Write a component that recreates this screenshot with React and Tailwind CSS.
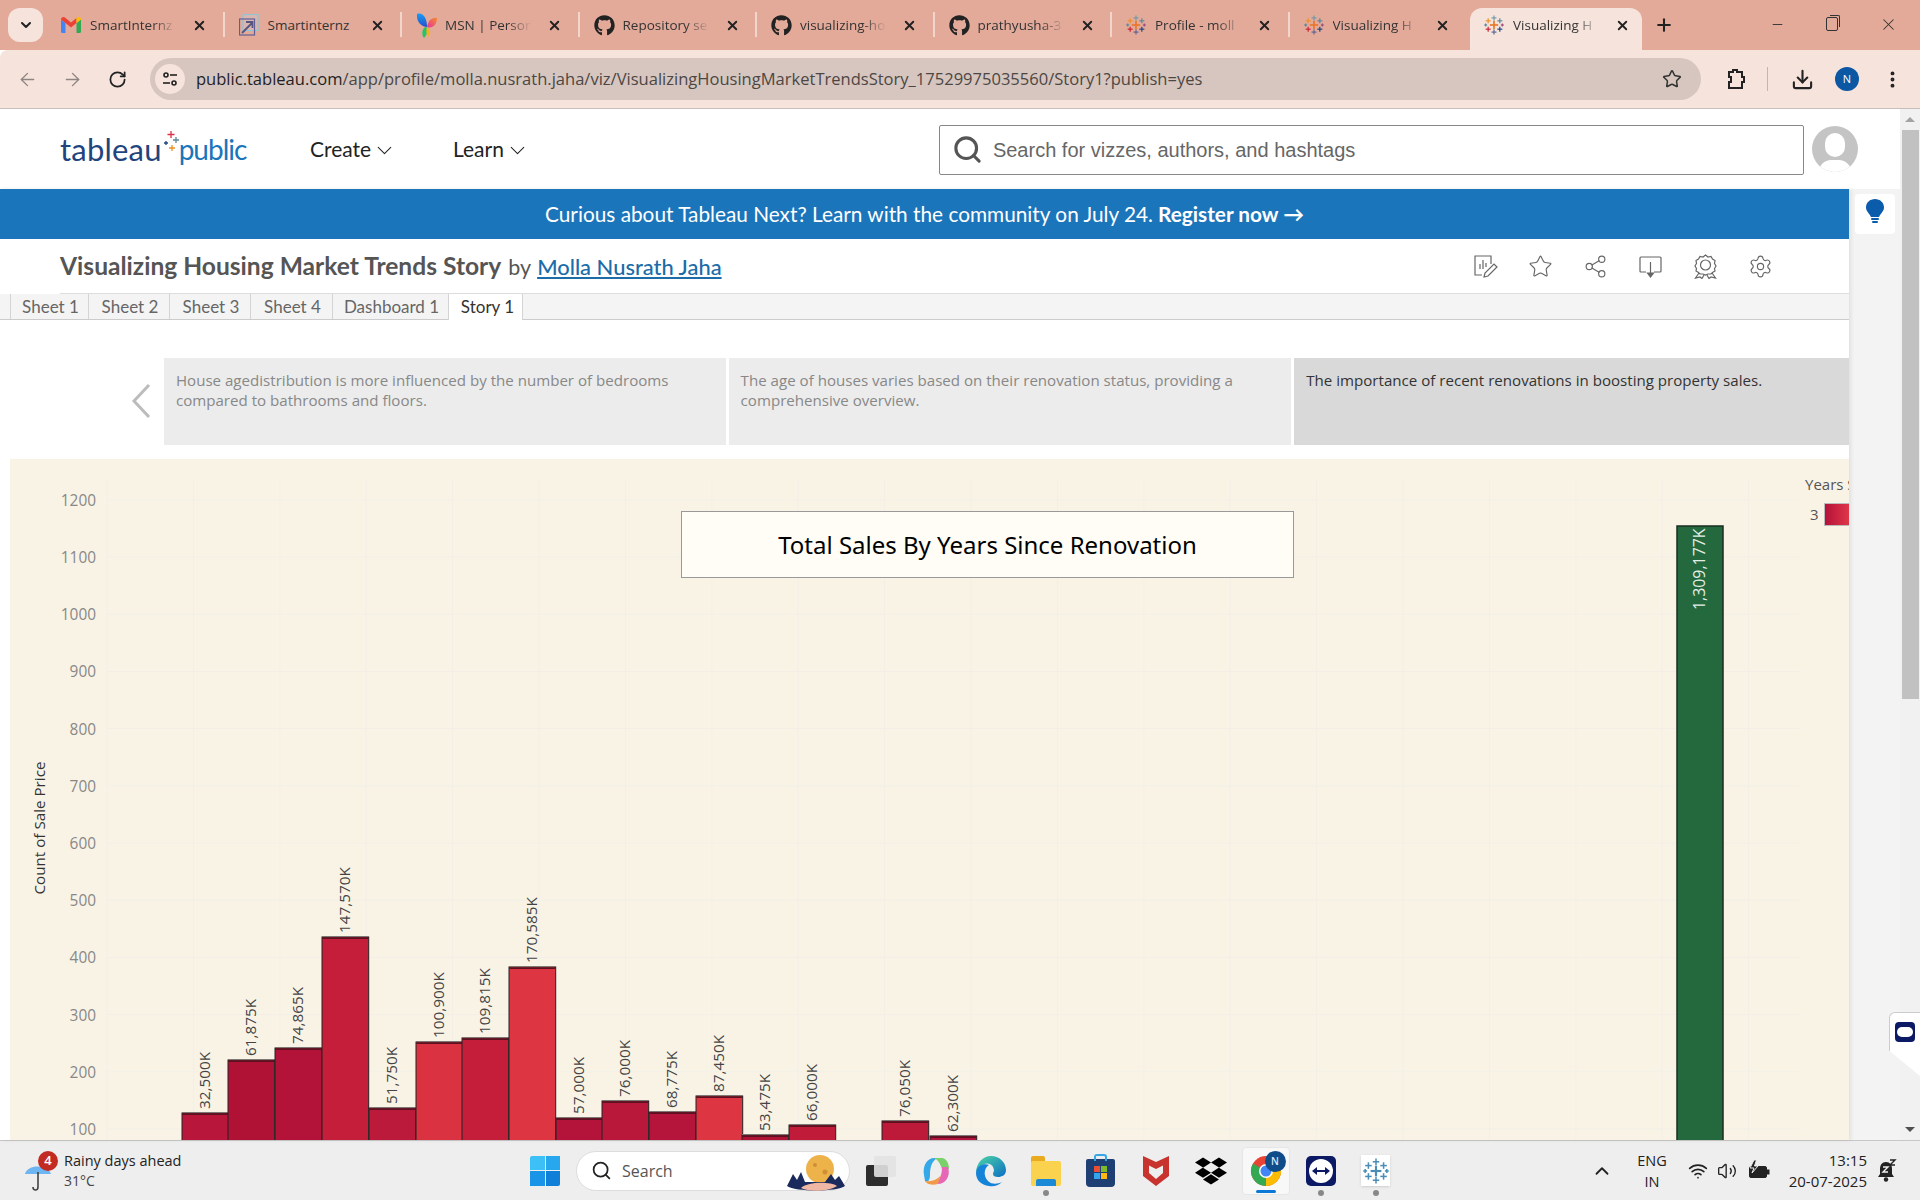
import React from "react";
import { FaGithub, FaDropbox } from "react-icons/fa";
import {
  ArrowLeft,
  ArrowRight,
  RotateCw,
  Star,
  Download,
  X,
  Plus,
  Minus,
  ChevronDown,
  ChevronUp,
  EllipsisVertical,
  Search,
  Share2,
  Settings,
  Wifi,
  Volume2,
} from "lucide-react";

const uiFont = "font-['Open_Sans','Noto_Sans',sans-serif]";
const tabFont = "font-['Lato','Noto_Sans',sans-serif]";

function TableauMark({ size = 20, mono }) {
  const cross = (x, y, r, c, w = 1.4) => (
    <g stroke={mono || c} strokeWidth={w}>
      <line x1={x - r} y1={y} x2={x + r} y2={y} />
      <line x1={x} y1={y - r} x2={x} y2={y + r} />
    </g>
  );
  return (
    <svg width={size} height={size} viewBox="0 0 24 24" className="shrink-0">
      {cross(12, 12, 5, "#e8762b", 2)}
      {cross(12, 3.5, 3, "#7099a6")}
      {cross(12, 20.5, 3, "#5b6591")}
      {cross(5, 7, 3, "#eb9129")}
      {cross(19, 7, 3, "#59879b")}
      {cross(5, 17, 3, "#c72035")}
      {cross(19, 17, 3, "#1f447e")}
      {cross(2, 12, 1.8, "#5b879b")}
      {cross(22, 12, 1.8, "#9c4d7c")}
    </svg>
  );
}

function GmailIcon() {
  return (
    <svg width="20" height="16" viewBox="0 0 20 16" className="shrink-0">
      <path d="M0 2.5 V14.5 Q0 16 1.5 16 H4.5 V6 Z" fill="#4285f4" />
      <path d="M20 2.5 V14.5 Q20 16 18.5 16 H15.5 V6 Z" fill="#34a853" />
      <path d="M0 2.5 Q0 0 2.5 0 Q3.5 0 4.5 1 L10 5.5 L15.5 1 V6 L10 10.5 L4.5 6 L0 2.5 Z" fill="#ea4335" />
      <path d="M15.5 1 Q16.5 0 17.5 0 Q20 0 20 2.5 L15.5 6 Z" fill="#fbbc04" />
    </svg>
  );
}

function SmartIcon() {
  return (
    <svg width="20" height="22" viewBox="0 0 20 22" fill="none" className="shrink-0">
      <rect x="4" y="0.5" width="15" height="16" stroke="#8fc5d6" strokeWidth="1.2" fill="#d9b6b0" />
      <rect x="0.5" y="5" width="15" height="16" stroke="#5f5f96" strokeWidth="1.2" />
      <path d="M3 19 L13 9 M7 8 H13.5 V14" stroke="#55557f" strokeWidth="1.8" />
    </svg>
  );
}

function MsnIcon() {
  return (
    <svg width="22" height="25" viewBox="0 0 22 25" className="shrink-0">
      <defs>
        <linearGradient id="msnWing" x1="0" y1="0" x2="0" y2="1">
          <stop offset="0" stopColor="#1c9cf4" />
          <stop offset="1" stopColor="#2450c8" />
        </linearGradient>
        <linearGradient id="msnRight" x1="1" y1="0" x2="0" y2="1">
          <stop offset="0" stopColor="#f58a2c" />
          <stop offset="1" stopColor="#e8349b" />
        </linearGradient>
      </defs>
      <path d="M1 1 C7 -1 11 5 11 14 C6 14 0 9 1 1 Z" fill="url(#msnWing)" />
      <path d="M21 5 C16 4 12 8 11 14 C16 16 21 12 21 5 Z" fill="url(#msnRight)" />
      <path d="M10.5 14 C6 14 5 22 8 25 C11 22 12 18 10.5 14 Z" fill="#25c46a" />
      <path d="M11 14 C15 16 15 21 12 24 C10 21 10 17 11 14 Z" fill="#f6b21a" />
    </svg>
  );
}

const tabs = [
  { title: "SmartInternz", icon: <GmailIcon /> },
  { title: "Smartinternz", icon: <SmartIcon />, solid: true },
  { title: "MSN | Person", icon: <MsnIcon /> },
  { title: "Repository se", icon: <FaGithub className="w-[21px] h-[21px] shrink-0 text-[#222]" /> },
  { title: "visualizing-ho", icon: <FaGithub className="w-[21px] h-[21px] shrink-0 text-[#222]" /> },
  { title: "prathyusha-3", icon: <FaGithub className="w-[21px] h-[21px] shrink-0 text-[#222]" /> },
  { title: "Profile - moll", icon: <TableauMark /> },
  { title: "Visualizing H", icon: <TableauMark /> },
  { title: "Visualizing H", icon: <TableauMark />, active: true },
];

function TabStrip() {
  return (
    <div className={`h-[50px] bg-[#e3aa9a] flex items-end shrink-0 relative ${uiFont}`}>
      <div className="w-[35px] h-[34px] mb-2 ml-2 mr-1 bg-[#f6e3dc] rounded-xl flex items-center justify-center">
        <ChevronDown size={16} strokeWidth={3} className="text-[#222]" />
      </div>
      {tabs.map((t, i) => (
        <div
          key={i}
          className={`relative flex items-center pl-[14px] pb-[8px] h-[42px] ${t.active ? "w-[172px] bg-[#f6e3dc] rounded-t-xl ml-[3px] mr-[3px]" : "w-[177.5px]"}`}
        >
          <div className="w-[29px] flex items-center shrink-0">{t.icon}</div>
          <div
            className={`w-[94px] overflow-hidden whitespace-nowrap text-[13.5px] text-[#333] ${t.solid ? "" : "[mask-image:linear-gradient(to_right,black_66%,transparent_92%)]"}`}
          >
            {t.title}
          </div>
          <X size={15} strokeWidth={3} className="ml-[8px] text-[#222] shrink-0" />
          {!t.active && i < 7 && (
            <div className="absolute right-0 top-[4px] h-[25px] w-[2px] bg-[#f3d6cb]" />
          )}
        </div>
      ))}
      <div className="h-[42px] flex items-center ml-[9px] pb-[8px]">
        <Plus size={20} strokeWidth={2.5} className="text-[#222]" />
      </div>
      <div className="h-[50px] flex items-center ml-[96px] pb-[2px] text-[#333]">
        <Minus size={15} strokeWidth={1.5} />
        <div className="ml-[41px] w-[12px] h-[14px] border border-[#333] rounded-[2px] relative">
          <div className="absolute -right-[3px] -top-[3px] w-[10px] h-[12px] border-t border-r border-[#333] rounded-tr-[2px]" />
        </div>
        <X size={19} strokeWidth={1.3} className="ml-[41px]" />
      </div>
    </div>
  );
}

function Toolbar() {
  return (
    <div className={`h-[59px] bg-[#f6e3dc] border-b border-[#c4c0bd] rounded-tl-lg flex items-center shrink-0 text-[#222] ${uiFont}`}>
      <ArrowLeft size={21} strokeWidth={1.6} className="ml-[17px] text-[#8f8683]" />
      <ArrowRight size={21} strokeWidth={1.6} className="ml-[24px] text-[#8f8683]" />
      <RotateCw size={19} strokeWidth={2.2} className="ml-[25px]" />
      <div className="ml-[23px] w-[1551px] h-[42px] bg-[#d6c6bf] rounded-full flex items-center pl-[5px]">
        <div className="w-[30px] h-[30px] rounded-full bg-[#f6e3dc] flex items-center justify-center">
          <svg width="16" height="16" viewBox="0 0 16 16" fill="none" stroke="#222" strokeWidth="1.6">
            <circle cx="4" cy="4" r="2" />
            <line x1="8" y1="4" x2="15" y2="4" />
            <circle cx="12" cy="12" r="2" />
            <line x1="1" y1="12" x2="8" y2="12" />
          </svg>
        </div>
        <div className="ml-[11px] text-[16.55px] whitespace-nowrap text-[#4d4744] flex-1">
          <span className="text-[#1f1f1f]">public.tableau.com</span>
          /app/profile/molla.nusrath.jaha/viz/VisualizingHousingMarketTrendsStory_17529975035560/Story1?publish=yes
        </div>
        <Star size={20} strokeWidth={1.8} className="mr-[19px] text-[#333]" />
      </div>
      <svg width="22" height="24" viewBox="0 0 22 24" fill="none" stroke="#222" strokeWidth="2" className="ml-[23px]">
        <path d="M5 5 H9 V3 H13 V5 H18 V10 H20 V15 H18 V21 H5 V15 H7 V10 H5 Z" />
      </svg>
      <div className="ml-[21px] w-[1px] h-[24px] bg-[#e3aa9a]" />
      <Download size={23} strokeWidth={2.2} className="ml-[23px]" />
      <div className="ml-[21px] w-[24px] h-[24px] rounded-full bg-[#0b57a4] text-white text-[11px] flex items-center justify-center">
        N
      </div>
      <EllipsisVertical size={21} strokeWidth={2.5} className="ml-[23px] -mr-[2px]" />
    </div>
  );
}

function SiteHeader() {
  return (
    <div className="h-[80px] bg-white flex items-center shrink-0 pl-[60px] font-['Lato',sans-serif]">
      <div className="w-[250px] flex items-center leading-none whitespace-nowrap">
        <span className="text-[31px] text-[#1f447e] font-normal tracking-[0.2px]">tableau</span>
        <svg width="17" height="30" viewBox="0 0 17 30" className="shrink-0 -mt-[8px]">
          <g strokeWidth="1.3">
            <path d="M9 1 V8 M5.5 4.5 H12.5" stroke="#d8334a" />
            <path d="M14 7 V13 M11 10 H17" stroke="#5b879b" />
            <path d="M4 11 V15 M2 13 H6" stroke="#1f447e" />
            <path d="M10 15 V21 M7 18 H13" stroke="#eb8f29" />
          </g>
        </svg>
        <span className="text-[28px] tracking-[-1px] text-[#1b75bb]">public</span>
      </div>
      <div className="flex items-center w-[143px] text-[21px] text-[#222]">
        Create
        <ChevronDown size={25} strokeWidth={1} className="ml-[1px] mt-[3px]" />
      </div>
      <div className="flex items-center text-[21px] text-[#222]">
        Learn
        <ChevronDown size={25} strokeWidth={1} className="ml-[1px] mt-[3px]" />
      </div>
      <div className="ml-[409px] w-[865px] h-[50px] border border-[#888] rounded-[2px] flex items-center pl-[12px] mt-[1px] font-['Liberation_Sans',sans-serif]">
        <Search size={31} strokeWidth={2.4} className="text-[#555]" />
        <span className="ml-[10px] text-[20px] text-[#666]">Search for vizzes, authors, and hashtags</span>
      </div>
      <div className="ml-[8px] w-[46px] h-[46px] rounded-full bg-[#c4c4c4] relative overflow-hidden">
        <div className="absolute left-[13px] top-[7px] w-[20px] h-[24px] rounded-full bg-white" />
        <div className="absolute left-[7px] top-[34px] w-[32px] h-[24px] rounded-full bg-white" />
      </div>
    </div>
  );
}

function VizToolbarIcons() {
  return (
    <div className="flex items-center gap-[30px] text-[#666] mr-[76px]">
      <svg width="25" height="25" viewBox="0 0 25 25" fill="none" stroke="#666" strokeWidth="1.2">
        <path d="M18 10 V2 H2 V21 H9" />
        <path d="M7 15 V10 M10 15 V6 M13 13 V9" />
        <path d="M11 23 L12 19 L21 10 L24 13 L15 22 Z" />
      </svg>
      <Star size={25} strokeWidth={1.1} />
      <Share2 size={25} strokeWidth={1.1} />
      <svg width="25" height="25" viewBox="0 0 25 25" fill="none" stroke="#666" strokeWidth="1.2">
        <path d="M8 18 H3 Q2 18 2 17 V4 Q2 3 3 3 H22 Q23 3 23 4 V17 Q23 18 22 18 H16" />
        <path d="M12.5 8 V20" />
        <path d="M9.5 19 H15.5 L12.5 23 Z" fill="#666" />
      </svg>
      <svg width="25" height="25" viewBox="0 0 25 25" fill="none" stroke="#666" strokeWidth="1.2">
        <path d="M12.5 1 L15 3 L18 2.5 L19.5 5 L22 6.5 L21.5 9.5 L23 12 L21.5 14.5 L22 17 L19.5 18.5 L18 20 L15 20 L12.5 21 L10 20 L7 20 L5.5 18.5 L3 17 L3.5 14.5 L2 12 L3.5 9.5 L3 6.5 L5.5 5 L7 2.5 L10 3 Z" />
        <circle cx="12.5" cy="11" r="5" />
        <path d="M6 19 L2.5 24 L7 23 L9 24.5 L11 21 M19 19 L22.5 24 L18 23 L16 24.5 L14 21" />
      </svg>
      <Settings size={25} strokeWidth={1.1} />
    </div>
  );
}

const sheetTabs = [
  { label: "Sheet 1", w: "w-[78px]" },
  { label: "Sheet 2", w: "w-[81px]" },
  { label: "Sheet 3", w: "w-[81px]" },
  { label: "Sheet 4", w: "w-[82px]" },
  { label: "Dashboard 1", w: "w-[116px]" },
  { label: "Story 1", w: "w-[75px]", active: true },
];

const storyPoints = [
  {
    w: "w-[562px]",
    text: "House agedistribution is more influenced by the number of bedrooms compared to bathrooms and floors.",
  },
  {
    w: "w-[563px]",
    text: "The age of houses varies based on their renovation status, providing a comprehensive overview.",
  },
  {
    w: "w-[555px]",
    text: "The importance of recent renovations in boosting property sales.",
    active: true,
  },
];

const bars = [
  [182, 1113, "32,500K", "#b8163a"],
  [228, 1060, "61,875K", "#b01236"],
  [275, 1048, "74,865K", "#b31338"],
  [322, 937, "147,570K", "#c41e3b"],
  [369, 1108, "51,750K", "#bb1a3a"],
  [416, 1042, "100,900K", "#da3240"],
  [462, 1038, "109,815K", "#c41e3b"],
  [509, 967, "170,585K", "#de3542"],
  [556, 1118, "57,000K", "#b5143a"],
  [602, 1101, "76,000K", "#ba183a"],
  [649, 1112, "68,775K", "#b5153a"],
  [696, 1096, "87,450K", "#dd3541"],
  [742, 1135, "53,475K", "#b01236"],
  [789, 1125, "66,000K", "#c01c3a"],
  [882, 1121, "76,050K", "#bd1a3a"],
  [930, 1136, "62,300K", "#b5143a"],
];

const barWidth = 46.7;

function Chart() {
  const ticks = [];
  for (let i = 1; i <= 12; i++) ticks.push(i * 100);
  const verticals = [];
  for (let x = 107; x < 1800; x += 86.4) verticals.push(x);
  return (
    <svg
      viewBox="10 459 1839 681"
      width="1839"
      height="681"
      className="block font-['Open_Sans',sans-serif]"
    >
      {ticks.map((t) => {
        const y = 1129 - (t / 100 - 1) * 57.2;
        return (
          <g key={t}>
            <line x1="107" y1={y} x2="1800" y2={y} stroke="#f3efe6" strokeWidth="1" />
            <text x="96" y={y + 6} textAnchor="end" fontSize="15.4" fill="#888">
              {t}
            </text>
          </g>
        );
      })}
      {verticals.map((x) => (
        <line key={x} x1={x} y1="480" x2={x} y2="1140" stroke="#f3efe6" strokeWidth="1" />
      ))}
      <text
        transform="translate(45 828) rotate(-90)"
        textAnchor="middle"
        fontSize="15.2"
        fill="#333"
      >
        Count of Sale Price
      </text>
      {bars.map(([x, top, label, color]) => (
        <g key={label}>
          <rect x={x} y={top - 1} width={barWidth} height="2" fill="#d9cfc4" />
          <rect x={x} y={top} width={barWidth} height={1140 - top + 2} fill={color} stroke="#222" strokeWidth="1" />
          <rect x={x + 0.5} y={top + 0.5} width={barWidth - 1} height="1.5" fill="#5c1020" />
          <text
            transform={`translate(${x + 28} ${top - 4}) rotate(-90)`}
            fontSize="15.3"
            fill="#444"
          >
            {label}
          </text>
        </g>
      ))}
      <rect x="1677" y="526" width="46" height="620" fill="#24693d" stroke="#1a2e22" strokeWidth="1.5" />
      <text
        transform="translate(1705 610) rotate(-90)"
        fontSize="15.9"
        fill="#e3efe6"
      >
        1,309,177K
      </text>
    </svg>
  );
}

function VizArea() {
  return (
    <div className="relative ml-[10px] h-[681px] bg-[#f9f3e6] overflow-hidden">
      <Chart />
      <div className="absolute left-[671px] top-[52px] w-[613px] h-[67px] bg-[#fffdf6] border border-[#999] flex items-center justify-center text-[24px] text-black font-['Noto_Sans',sans-serif]">
        Total Sales By Years Since Renovation
      </div>
      <div className="absolute left-[1795px] top-[14px] text-[15px] text-[#555] whitespace-nowrap font-['Open_Sans',sans-serif]">
        Years S
      </div>
      <div className="absolute left-[1800px] top-[44px] flex items-center gap-[5px] text-[15px] text-[#555] font-['Open_Sans',sans-serif]">
        3
        <div className="w-[30px] h-[23px] border border-[#bbb] bg-[linear-gradient(to_right,#b5123a,#e63c4a)]" />
      </div>
    </div>
  );
}

function Taskbar() {
  const slot = "w-[55px] h-[48px] flex items-center justify-center relative shrink-0";
  const dot = <div className="absolute bottom-[-1px] w-[6px] h-[6px] rounded-full bg-[#888]" />;
  return (
    <div className={`h-[60px] bg-[#eeeeee] border-t border-[#c8c8c8] flex items-center shrink-0 relative ${uiFont}`}>
      <div className="w-[530px] flex items-center shrink-0 relative">
        <svg width="28" height="34" viewBox="0 0 28 34" className="ml-[24px] mt-[8px] shrink-0">
          <path d="M1 16 C3 6 24 6 27 16 Z" fill="#6eb6f1" />
          <path d="M14 14 V29 C14 33 9 33 9 29" stroke="#444" strokeWidth="1.6" fill="none" />
        </svg>
        <div className="absolute left-[38px] top-[1px] w-[20px] h-[20px] rounded-full bg-[#c22b22] text-white text-[13px] font-semibold flex items-center justify-center">
          4
        </div>
        <div className="ml-[12px] text-[14.5px] leading-[20px] text-[#222]">
          <div>Rainy days ahead</div>
          <div className="text-[#444] text-[14px]">31°C</div>
        </div>
      </div>
      <div className="grid grid-cols-2 gap-[1px] w-[30px] h-[30px] shrink-0">
        <div className="bg-[#3cc0f5] rounded-tl-[2px]" />
        <div className="bg-[#27a8ee]" />
        <div className="bg-[#1a94e6]" />
        <div className="bg-[#0f7fd8] rounded-br-[2px]" />
      </div>
      <div className="ml-[16px] w-[274px] h-[40px] rounded-full bg-white border border-[#ddd] flex items-center pl-[14px] relative shrink-0">
        <Search size={21} strokeWidth={2} className="text-[#222]" />
        <span className="ml-[10px] text-[16px] text-[#555]">Search</span>
        <svg width="58" height="40" viewBox="0 0 58 40" className="absolute right-[4px] top-[0px]">
          <circle cx="33" cy="17" r="14" fill="#eeb24a" />
          <circle cx="28" cy="13" r="2" fill="#cf8f34" />
          <circle cx="38" cy="20" r="2.5" fill="#cf8f34" />
          <path d="M0 34 L6 22 L10 28 L14 20 L18 30 H38 L44 22 L48 28 L52 24 L58 34 C50 40 8 40 0 34 Z" fill="#1b2a5c" />
          <path d="M14 36 C22 29 44 30 50 34 C40 40 22 40 14 36 Z" fill="#f0b7a5" />
        </svg>
      </div>
      <div className="w-[3px] shrink-0" />
      <div className={slot}>
        <div className="relative w-[30px] h-[30px]">
          <div className="absolute left-[0px] top-[9px] w-[22px] h-[21px] rounded-[2px] bg-[#2d2d2d]" />
          <div className="absolute left-[8px] top-[0px] w-[22px] h-[21px] rounded-[2px] bg-[#e2e2e2]/90" />
        </div>
      </div>
      <div className={slot}>
        <svg width="32" height="32" viewBox="0 0 32 32">
          <path d="M4 20 C2 10 8 3 14 3 H18 C12 5 10 12 10 20 C10 25 8 28 5 26 Z" fill="#35a8e8" />
          <path d="M14 3 H22 C26 3 29 8 29 14 H22 C20 8 18 5 14 3 Z" fill="#7bd06b" />
          <path d="M28 12 C31 22 25 29 18 29 H12 C19 27 22 22 22 12 Z" fill="#e667b8" />
          <path d="M18 29 C10 31 6 28 5 26 C12 27 18 24 21 20 Z" fill="#f29a4a" />
        </svg>
      </div>
      <div className={slot}>
        <svg width="32" height="32" viewBox="0 0 32 32">
          <defs>
            <linearGradient id="edgeFill" x1="0" y1="0" x2="1" y2="1">
              <stop offset="0" stopColor="#4bd6a4" />
              <stop offset="1" stopColor="#0d6fc4" />
            </linearGradient>
          </defs>
          <path d="M16 1 C25 1 31 8 31 15 C31 20 27 22 23 22 C18 22 17 19 19 16 C19 10 14 7 9 9 C5 11 2 14 1 18 C1 8 8 1 16 1 Z" fill="url(#edgeFill)" />
          <path d="M1 18 C2 10 9 8 14 10 C9 13 8 21 13 26 C17 30 23 29 27 27 C23 31 18 32 14 31 C6 30 1 25 1 18 Z" fill="#1583d8" />
        </svg>
      </div>
      <div className={slot}>
        <div className="w-[30px] h-[30px] relative">
          <div className="absolute left-0 top-0 w-[14px] h-[7px] bg-[#e9aa1e] rounded-t-[2px]" />
          <div className="absolute left-0 top-[5px] w-[30px] h-[25px] bg-[#fbd24e] rounded-[2px]" />
          <div className="absolute left-[5px] bottom-0 w-[20px] h-[7px] bg-[#1a8ad6] rounded-t-[2px]" />
        </div>
        {dot}
      </div>
      <div className={slot}>
        <div className="w-[29px] h-[28px] bg-[#1d3f73] rounded-b-[4px] rounded-t-[2px] relative mt-[4px] flex items-center justify-center">
          <div className="absolute -top-[5px] left-[8px] w-[13px] h-[7px] border-2 border-b-0 border-[#37a6e6] rounded-t-[3px]" />
          <div className="grid grid-cols-2 gap-[1px] w-[13px] h-[13px]">
            <div className="bg-[#ea4f35]" />
            <div className="bg-[#7eba2a]" />
            <div className="bg-[#34a4ef]" />
            <div className="bg-[#fbb813]" />
          </div>
        </div>
      </div>
      <div className={slot}>
        <svg width="28" height="32" viewBox="0 0 28 32">
          <path d="M1 1 L14 7 L27 1 V21 L14 31 L1 21 Z" fill="#c8332e" />
          <path d="M7 10.5 L14 14 L21 10.5 V18 L14 24 L7 18 Z" fill="#eeeeee" />
        </svg>
      </div>
      <div className={slot}>
        <FaDropbox className="w-[32px] h-[32px] text-black" />
      </div>
      <div className="w-[48px] h-[48px] mx-[3.5px] bg-[#f8f8f8] border border-[#e6e6e6] rounded-[4px] flex items-center justify-center relative shrink-0">
        <svg width="32" height="32" viewBox="0 0 32 32">
          <circle cx="16" cy="16" r="15" fill="#e94335" />
          <path d="M16 16 L3 8.5 A15 15 0 0 0 16 31 Z" fill="#34a853" />
          <path d="M16 16 L16 31 A15 15 0 0 0 29 8.5 Z" fill="#fbbc04" />
          <circle cx="16" cy="16" r="7" fill="#fff" />
          <circle cx="16" cy="16" r="5.5" fill="#4285f4" />
        </svg>
        <div className="absolute right-[3px] top-[3px] w-[21px] h-[21px] rounded-full bg-[#0f4c8a] text-[10px] font-semibold text-[#d7e6f5] flex items-center justify-center">
          N
        </div>
        <div className="absolute bottom-[1px] w-[20px] h-[3px] rounded-full bg-[#0a78d4]" />
      </div>
      <div className={slot}>
        <div className="w-[30px] h-[30px] rounded-[5px] bg-[#0c1a66] flex items-center justify-center">
          <svg width="26" height="26" viewBox="0 0 26 26">
            <circle cx="13" cy="13" r="12" fill="#fff" />
            <path d="M4 13 L9 9 V12 H17 V9 L22 13 L17 17 V14 H9 V17 Z" fill="#0c1a66" />
          </svg>
        </div>
        {dot}
      </div>
      <div className={slot}>
        <div className="w-[29px] h-[31px] bg-white flex items-center justify-center shadow-sm">
          <TableauMark size={26} mono="#4a8db8" />
        </div>
        {dot}
      </div>
      <ChevronUp size={22} strokeWidth={2} className="ml-[188px] text-[#222] shrink-0" />
      <div className="ml-[21px] w-[36px] text-center text-[14.5px] leading-[21px] text-[#222] shrink-0">
        ENG
        <br />
        IN
      </div>
      <Wifi size={20} strokeWidth={2} className="ml-[18px] shrink-0 text-[#222]" />
      <Volume2 size={20} strokeWidth={1.6} className="ml-[9px] shrink-0 text-[#222]" />
      <svg width="24" height="24" viewBox="0 0 24 24" className="ml-[10px] shrink-0">
        <rect x="2.5" y="7.5" width="17" height="11" rx="1.5" fill="#222" stroke="#222" />
        <rect x="20" y="10.5" width="2.5" height="5" fill="#222" />
        <path d="M7 1 L3 9 H7 L5 14 L11 7 H7.5 L9.5 1 Z" fill="#222" stroke="#eeeeee" strokeWidth="1" />
      </svg>
      <div className="ml-[8px] w-[88px] text-right text-[15px] leading-[21px] text-[#222] shrink-0">
        13:15
        <br />
        20-07-2025
      </div>
      <svg width="20" height="24" viewBox="0 0 20 24" className="ml-[10px] shrink-0">
        <path d="M9 3 C5 3 3 6 3 10 V15 L1 18 H17 L15 15 V10 C15 6 13 3 9 3 Z" fill="#222" />
        <circle cx="9" cy="20.5" r="2.2" fill="#222" />
        <path d="M6 8 H11 L6 13 H11" stroke="#eeeeee" strokeWidth="1.4" fill="none" />
        <path d="M13 1 H18 L13 6 H18" stroke="#222" strokeWidth="1.4" fill="none" />
      </svg>
    </div>
  );
}

export default function App() {
  return (
    <div className="w-[1920px] h-[1200px] flex flex-col overflow-hidden bg-white">
      <TabStrip />
      <Toolbar />
      <div className="flex-1 flex min-h-0 relative">
        <div className="w-[1900px] flex flex-col min-h-0">
          <SiteHeader />
          <div className="flex flex-1 min-h-0">
            <div className="w-[1849px] flex flex-col min-h-0 relative z-10 shadow-[2px_0_4px_rgba(0,0,0,0.08)] bg-white">
              <div className="h-[50px] shrink-0 bg-[#1b75bb] text-white text-[20.8px] pb-[1px] flex items-center justify-center font-['Lato',sans-serif]">
                Curious about Tableau Next? Learn with the community on July 24.
                <span className="ml-[5px] font-bold">Register now →</span>
              </div>
              <div className="h-[55px] shrink-0 ml-[60px] border-b border-[#ddd] flex items-center justify-between font-['Lato',sans-serif]">
                <div className="flex items-baseline">
                  <span className="text-[24.6px] font-bold text-[#555]">Visualizing Housing Market Trends Story</span>
                  <span className="ml-[7px] text-[21.5px] text-[#555]">by</span>
                  <a className="ml-[6px] text-[21.9px] text-[#1b6ca8] underline font-medium">Molla Nusrath Jaha</a>
                </div>
                <VizToolbarIcons />
              </div>
              <div className={`h-[26px] shrink-0 bg-[#f4f4f4] border-b border-[#ccc] flex pl-[10px] text-[17px] text-[#666] ${tabFont}`}>
                {sheetTabs.map((s) => (
                  <div
                    key={s.label}
                    className={`${s.w} border-l border-[#d4d4d4] flex items-center justify-center pl-[2px] ${s.active ? "bg-white text-[#333] border-r h-[26px] pl-[4px]" : ""}`}
                  >
                    {s.label}
                  </div>
                ))}
              </div>
              <div className={`mt-[38px] h-[87px] shrink-0 flex ${uiFont}`}>
                <div className="w-[164px] flex items-center justify-end pr-[13px] pb-[2px]">
                  <svg width="20" height="34" viewBox="0 0 20 34" fill="none" stroke="#bcbcbc" strokeWidth="3">
                    <path d="M18 1 L3 17 L18 33" />
                  </svg>
                </div>
                {storyPoints.map((p, i) => (
                  <div
                    key={i}
                    className={`${p.w} ${i > 0 ? "ml-[3px]" : ""} px-[12px] pt-[12px] text-[15.1px] leading-[20px] ${p.active ? "bg-[#d9d9d9] text-[#333]" : "bg-[#ececec] text-[#888]"}`}
                  >
                    {p.text}
                  </div>
                ))}
              </div>
              <div className="mt-[14px]">
                <VizArea />
              </div>
            </div>
            <div className="w-[51px] bg-[#f3f3f3] flex justify-center pt-[5px]">
              <div className="w-[40px] h-[40px] bg-white rounded-[4px] flex justify-center pt-[5px]">
                <svg width="18" height="24" viewBox="0 0 18 24">
                  <path d="M9 0 C4 0 0 3.5 0 8.5 C0 12 3 14 5 18 H13 C15 14 18 12 18 8.5 C18 3.5 14 0 9 0 Z" fill="#0b5cab" />
                  <rect x="5" y="19" width="8" height="2" rx="1" fill="#0b5cab" />
                  <rect x="6" y="22" width="6" height="2" rx="1" fill="#0b5cab" />
                </svg>
              </div>
            </div>
          </div>
        </div>
        <div className="w-[20px] bg-[#f1f1f1] flex flex-col items-center">
          <div className="h-[21px] w-full flex items-center justify-center">
            <div className="w-0 h-0 border-l-[5px] border-r-[5px] border-b-[5px] border-l-transparent border-r-transparent border-b-[#a3a3a3]" />
          </div>
          <div className="w-[17px] h-[569px] bg-[#c1c1c1]" />
          <div className="flex-1" />
          <div className="h-[21px] w-full flex items-center justify-center">
            <div className="w-0 h-0 border-l-[5px] border-r-[5px] border-t-[5px] border-l-transparent border-r-transparent border-t-[#505050]" />
          </div>
        </div>
        <div className="absolute left-[1889px] top-[903px] z-20 w-[31px] h-[64px] bg-white border-l border-t border-[#ccc] rounded-tl-md [clip-path:polygon(0_0,100%_0,100%_100%,0_60%)] flex justify-end pt-[9px] pr-[5px]">
          <div className="w-[20px] h-[20px] rounded-[4px] bg-[#0c1a66] flex items-center justify-center">
            <div className="w-[16px] h-[10px] rounded-full bg-white" />
          </div>
        </div>
      </div>
      <Taskbar />
    </div>
  );
}
